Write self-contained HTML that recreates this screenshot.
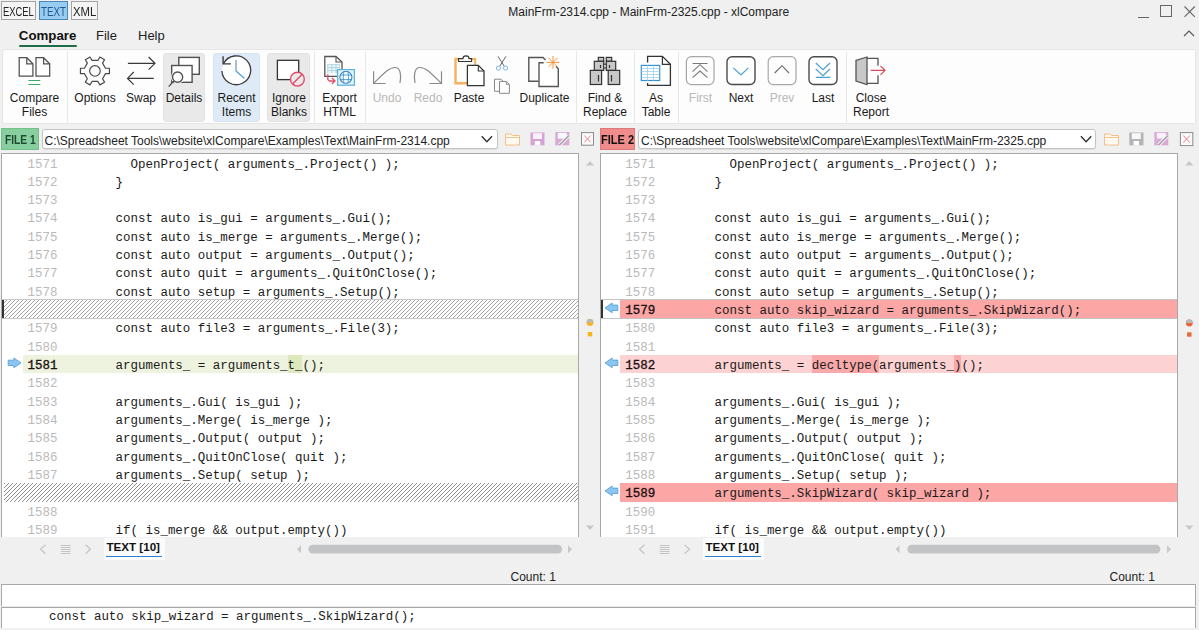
<!DOCTYPE html>
<html><head><meta charset="utf-8">
<style>
*{margin:0;padding:0;box-sizing:border-box}
html,body{width:1199px;height:630px;overflow:hidden;background:#f0f0f0;font-family:"Liberation Sans",sans-serif;color:#1a1a1a;position:relative}
.a{position:absolute}
.t{position:absolute;white-space:pre;line-height:1}
.mode{position:absolute;top:1.2px;height:18.4px;border:1px solid #a4a4a4;background:#f4f4f4;font-size:12px;line-height:16px;text-align:center;color:#333}
.ribbon{position:absolute;left:2.3px;top:49.3px;width:1193.5px;height:74.5px;background:#fdfdfd;border-radius:2px;border:1px solid #e6e6e6}
.sep{position:absolute;top:50.5px;width:1px;height:73px;background:#e8e8e8}
.btnbg{position:absolute;top:52.5px;height:69px;border-radius:3px}
.lbl{position:absolute;font-size:12px;line-height:14.2px;text-align:center;white-space:pre;color:#1a1a1a}
.dis{color:#b8b8b8}
svg{position:absolute;overflow:visible}
.pane{position:absolute;top:153px;height:384px;background:#fff;border:1px solid #a8a8a8;border-bottom:none;overflow:hidden}
.row{position:absolute;left:0;height:18.33px;width:100%}
.ln{position:absolute;top:2.0px;font-family:"Liberation Mono",monospace;font-size:12.47px;line-height:18.33px;color:#bababa;white-space:pre}
.code{position:absolute;top:2.0px;font-family:"Liberation Mono",monospace;font-size:12.47px;line-height:18.33px;color:#1a1a1a;white-space:pre}
.hatch{background:repeating-linear-gradient(135deg,#8e8e8e 0,#8e8e8e 0.95px,#fff 0.95px,#fff 2.83px)}
.hb{background:repeating-linear-gradient(135deg,#a4a4a4 0,#a4a4a4 0.9px,#fff 0.9px,#fff 2.83px);border-top:1px solid #c8c8c8;border-bottom:1px solid #c8c8c8}
</style></head><body>

<!-- mode buttons -->
<div class="mode" style="left:1.2px;width:34.5px"></div>
<div class="mode" style="left:39.2px;width:28.6px;background:#99ccf3;border-color:#4a88b8"></div>
<div class="mode" style="left:71.1px;width:26.6px"></div>
<div class="t" style="left:3.3px;top:5.5px;font-size:12.5px;color:#222;transform:scaleX(0.75);transform-origin:0 0">EXCEL</div>
<div class="t" style="left:41.1px;top:5.5px;font-size:12.5px;color:#1f5a8a;transform:scaleX(0.78);transform-origin:0 0">TEXT</div>
<div class="t" style="left:72.5px;top:5.5px;font-size:12.5px;color:#222;transform:scaleX(0.9);transform-origin:0 0">XML</div>

<!-- title -->
<div class="t" style="left:508.3px;top:6px;font-size:12px;color:#222">MainFrm-2314.cpp - MainFrm-2325.cpp - xlCompare</div>

<!-- window controls -->
<div class="a" style="left:1138px;top:16.5px;width:11px;height:1px;background:#666"></div>
<div class="a" style="left:1159.5px;top:4.8px;width:12.5px;height:12.5px;border:1px solid #666"></div>
<svg style="left:1183.5px;top:5.5px" width="12" height="12"><path d="M0.5 0.5L10.8 10.8M10.8 0.5L0.5 10.8" stroke="#666" stroke-width="1.1"/></svg>
<svg style="left:1183px;top:30px" width="12" height="7"><path d="M1 6L6 1L11 6" stroke="#555" stroke-width="1.1" fill="none"/></svg>

<!-- menu tabs -->
<div class="t" style="left:18.8px;top:29px;font-size:13.3px;font-weight:bold;color:#111">Compare</div>
<div class="a" style="left:18.5px;top:45.2px;width:58.5px;height:2.3px;background:#1f6e4a;border-radius:1px"></div>
<div class="t" style="left:96px;top:29px;font-size:13px;color:#222">File</div>
<div class="t" style="left:138px;top:29px;font-size:13px;color:#222">Help</div>

<!-- ribbon -->
<div class="ribbon"></div>
<!-- RIBBON_CONTENT -->
<!-- button backgrounds -->
<div class="btnbg" style="left:163.3px;width:42px;background:#e9e9e9;border:1px solid #e2e2e2"></div>
<div class="btnbg" style="left:212.8px;width:47.2px;background:#deeaf6;border:1px solid #d6e4f2"></div>
<div class="btnbg" style="left:267.4px;width:43px;background:#e9e9e9;border:1px solid #e2e2e2"></div>
<div class="sep" style="left:67px"></div>
<div class="sep" style="left:314px"></div>
<div class="sep" style="left:365px"></div>
<div class="sep" style="left:576px"></div>
<div class="sep" style="left:634px"></div>
<div class="sep" style="left:678px"></div>
<div class="sep" style="left:846px"></div>
<svg style="left:0;top:0" width="1199" height="130" fill="none" stroke-linejoin="miter">
 <!-- compare files -->
 <g stroke="#505050" stroke-width="1.25" fill="#fff">
  <path d="M19.2 57.7H26.8L32.9 63.8V76H19.2Z"/><path d="M26.8 57.7V63.8H32.9" fill="none"/>
  <path d="M36 57.7H43.6L49.7 63.8V76H36Z"/><path d="M43.6 57.7V63.8H49.7" fill="none"/>
 </g>
 <path d="M28.4 80.5H40.3M28.4 84.5H40.3" stroke="#3aaa6a" stroke-width="1.1"/>
 <!-- gear -->
 <path d="M105.49 68.25 L109.45 68.25 L109.45 73.65 L105.49 73.65 L102.56 78.73 L104.54 82.16 L99.86 84.86 L97.88 81.43 L92.02 81.43 L90.04 84.86 L85.36 82.16 L87.34 78.73 L84.41 73.65 L80.45 73.65 L80.45 68.25 L84.41 68.25 L87.34 63.17 L85.36 59.74 L90.04 57.04 L92.02 60.47 L97.88 60.47 L99.86 57.04 L104.54 59.74 L102.56 63.17Z" stroke="#4a4a4a" stroke-width="1.2" stroke-linejoin="round"/>
 <circle cx="94.95" cy="70.95" r="5.3" stroke="#4a4a4a" stroke-width="1.2"/>
 <!-- swap -->
 <path d="M127.9 63.3H155M148.6 57L155 63.3L148.6 69.7M127.5 78.4H153.8M133.8 72L127.5 78.4L133.8 84.7" stroke="#3a3a3a" stroke-width="1.2"/>
 <!-- details -->
 <mask id="mdet"><rect x="160" y="50" width="50" height="45" fill="#fff"/><circle cx="177.6" cy="77.1" r="6.7" fill="#000"/></mask>
 <g stroke="#505050" stroke-width="1.4">
  <rect x="178.8" y="57.4" width="20.5" height="16.9" fill="#fff"/>
  <rect x="171.7" y="65.5" width="20.4" height="16.8" fill="#fff" stroke="none"/>
  <rect x="171.7" y="65.5" width="20.4" height="16.8" fill="none" mask="url(#mdet)"/>
  <circle cx="177.6" cy="77.1" r="5.1" fill="#fff"/>
  <path d="M173.8 81L168.7 86.6"/>
 </g>
 <!-- recent -->
 <circle cx="236.3" cy="70.9" r="14.3" fill="#fff"/>
 <path d="M223.4 63.8A14.4 14.4 0 1 1 221.9 71" stroke="#3a3a3a" stroke-width="1.3"/>
 <path d="M223.1 56.2V63.9H230.9" stroke="#3a3a3a" stroke-width="1.4"/>
 <path d="M236 59.9V71" stroke="#6f9fbf" stroke-width="1.3"/>
 <path d="M236 71L244.3 78.3" stroke="#4aa0d8" stroke-width="1.3"/>
 <!-- ignore blanks -->
 <rect x="277.4" y="60.3" width="21.3" height="19.3" stroke="#333" stroke-width="1.3" fill="#fff"/>
 <circle cx="297.4" cy="79.2" r="6.9" stroke="#e04868" stroke-width="1.4" fill="#e9e9e9"/>
 <path d="M302.3 74.3L292.5 84.1" stroke="#e04868" stroke-width="1.4"/>
 <!-- export html -->
 <path d="M337 76.4H324.8V56.5H336L342 62V69" stroke="#555" stroke-width="1.3" fill="#fff"/>
 <path d="M336 56.5V62H342" stroke="#555" stroke-width="1.1"/>
 <rect x="327.2" y="64.1" width="12.7" height="9" fill="#b9d6de"/>
 <path d="M328.2 65.1h3v2h-3zM332.4 65.1h3v2h-3zM336.6 65.1h2.4v2h-2.4zM328.2 68.1h3v2h-3zM332.4 68.1h3v2h-3zM336.6 68.1h2.4v2h-2.4zM328.2 71.1h3v1.8h-3zM332.4 71.1h3v1.8h-3z" fill="#e6f8fb"/>
 <path d="M327.8 74.3V79.5L329.5 81H335M332 78L335 81L332 84" stroke="#e05068" stroke-width="1.3"/>
 <rect x="337.6" y="69.6" width="16.8" height="15.6" fill="#e4f4fb" stroke="#62b4d8" stroke-width="1.3"/>
 <circle cx="345.9" cy="77.3" r="6" stroke="#3a88c8" stroke-width="1.1" fill="#f4fbff"/>
 <path d="M340.2 75H351.6M340.2 79.6H351.6M344 71.6C343 74.5 343 80 344 83M347.8 71.6C348.8 74.5 348.8 80 347.8 83" stroke="#3a88c8" stroke-width="0.8"/>
 <!-- undo redo -->
 <path d="M373.6 71.3V83.5H385.6M374 83C384 73 389 67.5 395 67.5C400.5 67.5 401.5 75 400 83" stroke="#8a8a8a" stroke-width="1.2"/>
 <path d="M441.5 71.3V83.5H429.5M441 83C431 73 426 67.5 420 67.5C414.5 67.5 413.5 75 415 83" stroke="#8a8a8a" stroke-width="1.2"/>
 <!-- paste -->
 <path d="M459 59H455.5V83.2H467" stroke="#f6b260" stroke-width="2.4"/>
 <path d="M471 59H475.2V65.5" stroke="#f6b260" stroke-width="2"/>
 <path d="M458.6 61.5V58.6H463C463 55 469 55 469 58.6H471.6V61.5Z" stroke="#333" stroke-width="1.1" fill="#fff"/>
 <path d="M467.4 65.3H478.3L484 71V85.6H467.4Z" stroke="#333" stroke-width="1.25" fill="#fff"/>
 <path d="M478.3 65.3V71H484" stroke="#333" stroke-width="1.1"/>
 <!-- scissors -->
 <path d="M498 56.3L504.3 66.3M506 56.3L499.7 66.3" stroke="#666" stroke-width="1"/>
 <circle cx="498.4" cy="68.1" r="2.1" stroke="#7fb6e4" stroke-width="1" fill="#fff"/>
 <circle cx="505.6" cy="68.1" r="2.1" stroke="#7fb6e4" stroke-width="1" fill="#fff"/>
 <!-- copy -->
 <path d="M499.4 91.3H494.5V79.2H501L503 81.2" stroke="#888" stroke-width="1"/>
 <path d="M499.5 81.4H506.3L509.4 84.4V93.3H499.5Z" stroke="#888" stroke-width="1" fill="#fff"/>
 <path d="M506.3 81.4V84.4H509.4" stroke="#888" stroke-width="0.9"/>
 <!-- duplicate -->
 <path d="M538.5 81.3H528.8V57.5H543L545.5 60" stroke="#555" stroke-width="1.4"/>
 <path d="M543.7 62.7H539V86.5H558.3V68.8L556 66.5" stroke="#555" stroke-width="1.4" fill="#fff"/>
 <path d="M553 56V68.8M546.6 62.4H559.4M548.5 57.9L557.5 66.9M557.5 57.9L548.5 66.9" stroke="#f39440" stroke-width="1"/>
 <!-- binoculars -->
 <g stroke="#333" stroke-width="1.2" fill="#c8c8c8">
  <rect x="598.3" y="57.4" width="5.4" height="3.9"/><rect x="606.3" y="57.4" width="5.4" height="3.9"/>
  <rect x="594.3" y="61.3" width="9.4" height="9.1"/><rect x="606.3" y="61.3" width="9.4" height="9.1"/>
  <rect x="590.3" y="70.4" width="11.3" height="14.1"/><rect x="608.2" y="70.4" width="11.5" height="14.1"/>
  <path d="M603.7 64.2H606.3M603.7 68H606.3" fill="none"/>
  <path d="M600.5 65V68M609.5 65V68M598.5 75V81.5M611.5 75V81.5" fill="none"/>
 </g>
 <!-- as table -->
 <path d="M647.6 62.5V56.4H662.4L670.4 64.3V85.3H647.6V83" stroke="#333" stroke-width="1.3" fill="#fff"/>
 <path d="M662.4 56.4V64.3H670.4" stroke="#333" stroke-width="1.2"/>
 <rect x="641.3" y="65.4" width="18.4" height="15.1" fill="#fff" stroke="#3a8fd0" stroke-width="1.2"/>
 <path d="M647.5 65.5V80.5M653.5 65.5V80.5M641.5 68.5H659.5M641.5 71.5H659.5M641.5 74.5H659.5M641.5 77.5H659.5" stroke="#9fd0ee" stroke-width="0.8"/>
 <!-- first -->
 <rect x="686.4" y="56.6" width="27.6" height="28" rx="5" stroke="#a8a8a8" stroke-width="1.2" fill="#fdfdfd"/>
 <path d="M692.5 63.5H707.5M692.5 71.7L700 64.7L707.5 71.7M692.5 77.7L700 71L707.5 77.7" stroke="#7a7a7a" stroke-width="1.1"/>
 <!-- next -->
 <rect x="727" y="56.8" width="28" height="27.7" rx="5" stroke="#4a4a4a" stroke-width="1.4" fill="#fff"/>
 <path d="M733.3 67.9L741 75L748.3 67.9" stroke="#4a9fd5" stroke-width="1.2"/>
 <!-- prev -->
 <rect x="768.2" y="56.6" width="27.8" height="28" rx="5" stroke="#a8a8a8" stroke-width="1.2" fill="#fdfdfd"/>
 <path d="M774.7 73L782 65.7L789 73" stroke="#6a6a6a" stroke-width="1.1"/>
 <!-- last -->
 <rect x="809" y="56.8" width="28" height="27.7" rx="5" stroke="#4a4a4a" stroke-width="1.4" fill="#fff"/>
 <path d="M815.8 63L823 69.7L830 63M815.8 69L823 75.7L830 69M815.8 77.3H830.3" stroke="#4a9fd5" stroke-width="1.2"/>
 <!-- close report -->
 <path d="M856 60.3L867 57V84.7L856 81Z" fill="#c8c8c8" stroke="#555" stroke-width="1.3"/>
 <path d="M867 58.3H878V65.7M878 75.2V83.3H867" stroke="#555" stroke-width="1.3"/>
 <path d="M870.7 70.3H885M880.5 65.8L885 70.3L880.5 74.8" stroke="#d94a5a" stroke-width="1.2"/>
</svg>
<div class="lbl" style="left:4.5px;top:90.7px;width:60px">Compare
Files</div>
<div class="lbl" style="left:70px;top:90.7px;width:50px">Options</div>
<div class="lbl" style="left:121px;top:90.7px;width:40px">Swap</div>
<div class="lbl" style="left:164px;top:90.7px;width:40px">Details</div>
<div class="lbl" style="left:211.5px;top:90.7px;width:50px">Recent
Items</div>
<div class="lbl" style="left:264px;top:90.7px;width:50px">Ignore
Blanks</div>
<div class="lbl" style="left:314.5px;top:90.7px;width:50px">Export
HTML</div>
<div class="lbl dis" style="left:367px;top:90.7px;width:40px">Undo</div>
<div class="lbl dis" style="left:408px;top:90.7px;width:40px">Redo</div>
<div class="lbl" style="left:449px;top:90.7px;width:40px">Paste</div>
<div class="lbl" style="left:514.5px;top:90.7px;width:60px">Duplicate</div>
<div class="lbl" style="left:575px;top:90.7px;width:60px">Find &amp;
Replace</div>
<div class="lbl" style="left:631px;top:90.7px;width:50px">As
Table</div>
<div class="lbl dis" style="left:680.5px;top:90.7px;width:40px">First</div>
<div class="lbl" style="left:721px;top:90.7px;width:40px">Next</div>
<div class="lbl dis" style="left:762px;top:90.7px;width:40px">Prev</div>
<div class="lbl" style="left:803px;top:90.7px;width:40px">Last</div>
<div class="lbl" style="left:846px;top:90.7px;width:50px">Close
Report</div>


<!-- FILEBARS -->
<!-- file bar 1 -->
<div class="a" style="left:1.2px;top:128.1px;width:37.5px;height:21.6px;background:#88cfa0;border:1px solid #72c08c"></div>
<div class="t" style="left:4.8px;top:134.3px;font-size:12px;font-weight:bold;color:#1e4a30;transform:scaleX(0.85);transform-origin:0 0">FILE 1</div>
<div class="a" style="left:42px;top:128.5px;width:455.7px;height:20.8px;background:#fff;border:1px solid #c4c4c4;border-radius:3px;box-shadow:0 1px 1px rgba(0,0,0,0.08)"></div>
<div class="t" style="left:44.5px;top:134.6px;font-size:12px;color:#222">C:\Spreadsheet Tools\website\xlCompare\Examples\Text\MainFrm-2314.cpp</div>
<!-- file bar 2 -->
<div class="a" style="left:600.1px;top:128.3px;width:35px;height:21.3px;background:#f08c8c;border:1px solid #e07a7a"></div>
<div class="t" style="left:601.4px;top:134.3px;font-size:12px;font-weight:bold;color:#111;transform:scaleX(0.92);transform-origin:0 0">FILE 2</div>
<div class="a" style="left:638.4px;top:128.5px;width:458px;height:20.8px;background:#fff;border:1px solid #c4c4c4;border-radius:3px;box-shadow:0 1px 1px rgba(0,0,0,0.08)"></div>
<div class="t" style="left:641px;top:134.6px;font-size:12px;color:#222">C:\Spreadsheet Tools\website\xlCompare\Examples\Text\MainFrm-2325.cpp</div>
<svg style="left:0;top:0" width="1199" height="160" fill="none">
 <path d="M481.7 136.3L486.9 141.8L492 136.3" stroke="#333" stroke-width="1.4"/>
 <path d="M1080.9 136.3L1086.1 141.8L1091.2 136.3" stroke="#333" stroke-width="1.4"/>
 <!-- folder L -->
 <path d="M505.5 145V134H511L512.5 135.5H519.5V145Z" stroke="#f2c088" stroke-width="1" fill="#fff9ef"/>
 <path d="M505.5 137.5H519.5" stroke="#f2c088" stroke-width="1"/>
 <!-- save L purple -->
 <path d="M530.5 132.5H544.5V145.3H530.5Z" fill="#d7a3d6"/>
 <rect x="533" y="133.2" width="9" height="5.8" fill="#fbf0fb"/>
 <rect x="534.8" y="141" width="5.4" height="4.3" fill="#fff"/>
 <!-- save-as L -->
 <path d="M555.3 132H569.3V145.3H555.3Z" fill="#d9a9d8"/>
 <rect x="557.8" y="132.8" width="9" height="5.8" fill="#f4fbff"/>
 <path d="M559.5 145L568.5 136" stroke="#fff" stroke-width="3.2"/>
 <path d="M559.5 145L568.5 136" stroke="#777" stroke-width="1.6"/>
 <path d="M559.5 145L568.5 136" stroke="#fff" stroke-width="0.6"/>
 <!-- close L -->
 <rect x="581.5" y="132.6" width="12" height="12.6" stroke="#8a8a8a" stroke-width="1" fill="#fafafa"/>
 <path d="M584.3 135.5L590.7 142.3M590.7 135.5L584.3 142.3" stroke="#f0808f" stroke-width="1"/>
 <!-- folder R -->
 <path d="M1104.5 145V134H1110L1111.5 135.5H1118.5V145Z" stroke="#f2c088" stroke-width="1" fill="#fff9ef"/>
 <path d="M1104.5 137.5H1118.5" stroke="#f2c088" stroke-width="1"/>
 <!-- save R gray -->
 <path d="M1129.3 132.5H1143.5V145.3H1129.3Z" fill="#b4b4b4"/>
 <rect x="1131.8" y="133.2" width="9" height="5.8" fill="#f8f8f8"/>
 <rect x="1133.6" y="141" width="5.4" height="4.3" fill="#fff"/>
 <!-- save-as R -->
 <path d="M1154.3 132H1168.3V145.3H1154.3Z" fill="#d9a9d8"/>
 <rect x="1156.8" y="132.8" width="9" height="5.8" fill="#fbf0fb"/>
 <path d="M1158.5 145L1167.5 136" stroke="#fff" stroke-width="3.2"/>
 <path d="M1158.5 145L1167.5 136" stroke="#777" stroke-width="1.6"/>
 <path d="M1158.5 145L1167.5 136" stroke="#fff" stroke-width="0.6"/>
 <!-- close R -->
 <rect x="1180.4" y="132.6" width="12.4" height="13" stroke="#8a8a8a" stroke-width="1" fill="#fafafa"/>
 <path d="M1183.3 135.5L1189.9 142.7M1189.9 135.5L1183.3 142.7" stroke="#f0808f" stroke-width="1"/>
</svg>




<div class="pane" style="left:1px;width:578px">
<div class="row" style="top:-0.50px"><div class="ln" style="left:25.5px;">1571</div><div class="code" style="left:113.5px">  OpenProject( arguments_.Project() );</div></div>
<div class="row" style="top:17.83px"><div class="ln" style="left:25.5px;">1572</div><div class="code" style="left:113.5px">}</div></div>
<div class="row" style="top:36.16px"><div class="ln" style="left:25.5px;">1573</div></div>
<div class="row" style="top:54.49px"><div class="ln" style="left:25.5px;">1574</div><div class="code" style="left:113.5px">const auto is_gui = arguments_.Gui();</div></div>
<div class="row" style="top:72.82px"><div class="ln" style="left:25.5px;">1575</div><div class="code" style="left:113.5px">const auto is_merge = arguments_.Merge();</div></div>
<div class="row" style="top:91.15px"><div class="ln" style="left:25.5px;">1576</div><div class="code" style="left:113.5px">const auto output = arguments_.Output();</div></div>
<div class="row" style="top:109.48px"><div class="ln" style="left:25.5px;">1577</div><div class="code" style="left:113.5px">const auto quit = arguments_.QuitOnClose();</div></div>
<div class="row" style="top:127.81px"><div class="ln" style="left:25.5px;">1578</div><div class="code" style="left:113.5px">const auto setup = arguments_.Setup();</div></div>
<div class="row hatch hb" style="top:145.34px;height:19.83px"></div>
<div class="a" style="left:0;top:146.14px;width:2px;height:18.33px;background:#333"></div>
<div class="row" style="top:164.47px"><div class="ln" style="left:25.5px;">1579</div><div class="code" style="left:113.5px">const auto file3 = arguments_.File(3);</div></div>
<div class="row" style="top:182.80px"><div class="ln" style="left:25.5px;">1580</div></div>
<div class="row" style="top:201.13px"><div class="a" style="left:21px;top:0;right:0;bottom:0;background:#eef3df"></div><svg style="left:0;top:0" width="22" height="18"><path d="M19 7.9L11.9 3V5.2H6.2V10.6H11.9V12.7Z" fill="#8cc6ef" stroke="#5a9fd8" stroke-width="0.9" stroke-linejoin="round"/></svg><div class="a" style="left:285.54px;top:0;width:14.96px;height:100%;background:#dde8bd"></div><div class="ln" style="left:25.5px;color:#1e1212;-webkit-text-stroke:0.35px #1e1212;">1581</div><div class="code" style="left:113.5px">arguments_ = arguments_t_();</div></div>
<div class="row" style="top:219.46px"><div class="ln" style="left:25.5px;">1582</div></div>
<div class="row" style="top:237.79px"><div class="ln" style="left:25.5px;">1583</div><div class="code" style="left:113.5px">arguments_.Gui( is_gui );</div></div>
<div class="row" style="top:256.12px"><div class="ln" style="left:25.5px;">1584</div><div class="code" style="left:113.5px">arguments_.Merge( is_merge );</div></div>
<div class="row" style="top:274.45px"><div class="ln" style="left:25.5px;">1585</div><div class="code" style="left:113.5px">arguments_.Output( output );</div></div>
<div class="row" style="top:292.78px"><div class="ln" style="left:25.5px;">1586</div><div class="code" style="left:113.5px">arguments_.QuitOnClose( quit );</div></div>
<div class="row" style="top:311.11px"><div class="ln" style="left:25.5px;">1587</div><div class="code" style="left:113.5px">arguments_.Setup( setup );</div></div>
<div class="row hatch" style="top:329.14px;height:18.93px;left:1.5px"></div>
<div class="row" style="top:347.77px"><div class="ln" style="left:25.5px;">1588</div></div>
<div class="row" style="top:366.10px"><div class="ln" style="left:25.5px;">1589</div><div class="code" style="left:113.5px">if( is_merge &amp;&amp; output.empty())</div></div>
</div>
<div class="pane" style="left:600px;width:577.8px">
<div class="row" style="top:-0.50px"><div class="ln" style="left:24.2px;">1571</div><div class="code" style="left:113.5px">  OpenProject( arguments_.Project() );</div></div>
<div class="row" style="top:17.83px"><div class="ln" style="left:24.2px;">1572</div><div class="code" style="left:113.5px">}</div></div>
<div class="row" style="top:36.16px"><div class="ln" style="left:24.2px;">1573</div></div>
<div class="row" style="top:54.49px"><div class="ln" style="left:24.2px;">1574</div><div class="code" style="left:113.5px">const auto is_gui = arguments_.Gui();</div></div>
<div class="row" style="top:72.82px"><div class="ln" style="left:24.2px;">1575</div><div class="code" style="left:113.5px">const auto is_merge = arguments_.Merge();</div></div>
<div class="row" style="top:91.15px"><div class="ln" style="left:24.2px;">1576</div><div class="code" style="left:113.5px">const auto output = arguments_.Output();</div></div>
<div class="row" style="top:109.48px"><div class="ln" style="left:24.2px;">1577</div><div class="code" style="left:113.5px">const auto quit = arguments_.QuitOnClose();</div></div>
<div class="row" style="top:127.81px"><div class="ln" style="left:24.2px;">1578</div><div class="code" style="left:113.5px">const auto setup = arguments_.Setup();</div></div>
<div class="row" style="top:146.14px"><div class="a" style="left:19px;top:0;right:0;bottom:0;background:#fca6a6"></div><svg style="left:0;top:0" width="22" height="18"><path d="M4 7.9L11.1 3V5.1H16.8V10.5H11.1V12.7Z" fill="#8cc6ef" stroke="#5a9fd8" stroke-width="0.9" stroke-linejoin="round"/></svg><div class="a" style="left:0;top:-0.8px;right:0;height:1px;background:#c4c4c4"></div><div class="a" style="left:0;bottom:-0.7px;right:0;height:1px;background:#c4c4c4"></div><div class="a" style="left:0;top:0;width:1.8px;height:100%;background:#333"></div><div class="ln" style="left:24.2px;color:#1e1212;-webkit-text-stroke:0.35px #1e1212;">1579</div><div class="code" style="left:113.5px">const auto skip_wizard = arguments_.SkipWizard();</div></div>
<div class="row" style="top:164.47px"><div class="ln" style="left:24.2px;">1580</div><div class="code" style="left:113.5px">const auto file3 = arguments_.File(3);</div></div>
<div class="row" style="top:182.80px"><div class="ln" style="left:24.2px;">1581</div></div>
<div class="row" style="top:201.13px"><div class="a" style="left:19px;top:0;right:0;bottom:0;background:#fdd2d2"></div><svg style="left:0;top:0" width="22" height="18"><path d="M4 7.9L11.1 3V5.1H16.8V10.5H11.1V12.7Z" fill="#8cc6ef" stroke="#5a9fd8" stroke-width="0.9" stroke-linejoin="round"/></svg><div class="a" style="left:210.74px;top:0;width:67.32px;height:100%;background:#f9a9a9"></div><div class="a" style="left:352.86px;top:0;width:7.48px;height:100%;background:#f9a9a9"></div><div class="ln" style="left:24.2px;color:#1e1212;-webkit-text-stroke:0.35px #1e1212;">1582</div><div class="code" style="left:113.5px">arguments_ = decltype(arguments_)();</div></div>
<div class="row" style="top:219.46px"><div class="ln" style="left:24.2px;">1583</div></div>
<div class="row" style="top:237.79px"><div class="ln" style="left:24.2px;">1584</div><div class="code" style="left:113.5px">arguments_.Gui( is_gui );</div></div>
<div class="row" style="top:256.12px"><div class="ln" style="left:24.2px;">1585</div><div class="code" style="left:113.5px">arguments_.Merge( is_merge );</div></div>
<div class="row" style="top:274.45px"><div class="ln" style="left:24.2px;">1586</div><div class="code" style="left:113.5px">arguments_.Output( output );</div></div>
<div class="row" style="top:292.78px"><div class="ln" style="left:24.2px;">1587</div><div class="code" style="left:113.5px">arguments_.QuitOnClose( quit );</div></div>
<div class="row" style="top:311.11px"><div class="ln" style="left:24.2px;">1588</div><div class="code" style="left:113.5px">arguments_.Setup( setup );</div></div>
<div class="row" style="top:329.44px"><div class="a" style="left:19px;top:0;right:0;bottom:0;background:#fca6a6"></div><svg style="left:0;top:0" width="22" height="18"><path d="M4 7.9L11.1 3V5.1H16.8V10.5H11.1V12.7Z" fill="#8cc6ef" stroke="#5a9fd8" stroke-width="0.9" stroke-linejoin="round"/></svg><div class="ln" style="left:24.2px;color:#1e1212;-webkit-text-stroke:0.35px #1e1212;">1589</div><div class="code" style="left:113.5px">arguments_.SkipWizard( skip_wizard );</div></div>
<div class="row" style="top:347.77px"><div class="ln" style="left:24.2px;">1590</div></div>
<div class="row" style="top:366.10px"><div class="ln" style="left:24.2px;">1591</div><div class="code" style="left:113.5px">if( is_merge &amp;&amp; output.empty())</div></div>
</div>


<!-- BOTTOM -->
<!-- gutter markers -->
<svg style="left:0;top:150px" width="1199" height="420" fill="none">
 <path d="M586 15.5L590 11L594 15.5Z" fill="#c8c8c8"/>
 <path d="M586 375.5L590 380L594 375.5Z" fill="#c8c8c8"/>
 <path d="M1185.3 15.5L1189.3 11L1193.3 15.5Z" fill="#c8c8c8"/>
 <path d="M1185.3 375.5L1189.3 380L1193.3 375.5Z" fill="#c8c8c8"/>
 <circle cx="590" cy="172.5" r="3.4" fill="#f4b41a"/>
 <path d="M586.6 172.5A3.4 3.4 0 0 1 593.4 172.5Z" fill="#b9b9b9"/>
 <rect x="587.8" y="182" width="4.4" height="4.4" fill="#f4b41a"/>
 <circle cx="1189.3" cy="173" r="3.4" fill="#e8643a"/>
 <path d="M1185.9 173A3.4 3.4 0 0 1 1192.7 173Z" fill="#b9b9b9"/>
 <rect x="1187.1" y="182.3" width="4.4" height="4.4" fill="#e26d33"/>
</svg>
<!-- tab bars -->
<div class="a" style="left:104px;top:537.5px;width:60.7px;height:22px;background:#fbfbfb"></div>
<div class="a" style="left:702.5px;top:537.5px;width:61px;height:22px;background:#fbfbfb"></div>
<svg style="left:0;top:530px" width="1199" height="40" fill="none">
 <path d="M45.5 14.8L40.5 19.3L45.5 23.8" stroke="#c4c4c4" stroke-width="1.2"/>
 <path d="M60.8 15.5H70.6M60.8 17.5H70.6M60.8 19.5H70.6M60.8 21.5H70.6M60.8 23.5H70.6" stroke="#c4c4c4" stroke-width="1"/>
 <path d="M85.5 14.8L90.5 19.3L85.5 23.8" stroke="#c4c4c4" stroke-width="1.2"/>
 <path d="M644.5 14.8L639.5 19.3L644.5 23.8" stroke="#c4c4c4" stroke-width="1.2"/>
 <path d="M659.8 15.5H669.6M659.8 17.5H669.6M659.8 19.5H669.6M659.8 21.5H669.6M659.8 23.5H669.6" stroke="#c4c4c4" stroke-width="1"/>
 <path d="M684.5 14.8L689.5 19.3L684.5 23.8" stroke="#c4c4c4" stroke-width="1.2"/>
 <!-- scrollbars -->
 <path d="M301 15.2L297 19.2L301 23.2Z" fill="#c8c8c8"/>
 <rect x="308.4" y="14.8" width="253.7" height="8.6" rx="4.3" fill="#c2c4c6"/>
 <path d="M568 15.2L572 19.2L568 23.2Z" fill="#c8c8c8"/>
 <path d="M899.5 15.2L895.5 19.2L899.5 23.2Z" fill="#c8c8c8"/>
 <rect x="907.4" y="14.8" width="253" height="8.6" rx="4.3" fill="#c2c4c6"/>
 <path d="M1167 15.2L1171 19.2L1167 23.2Z" fill="#c8c8c8"/>
</svg>
<div class="t" style="left:106.5px;top:541.4px;font-size:11.6px;font-weight:bold;color:#111">TEXT [10]</div>
<div class="a" style="left:106px;top:555.7px;width:56.3px;height:1.8px;background:#2a7fd0"></div>
<div class="t" style="left:705.5px;top:541.4px;font-size:11.6px;font-weight:bold;color:#111">TEXT [10]</div>
<div class="a" style="left:705.1px;top:555.7px;width:56.3px;height:1.8px;background:#2a7fd0"></div>
<div class="t" style="left:510.5px;top:571px;font-size:12px;color:#222">Count: 1</div>
<div class="t" style="left:1109.5px;top:571px;font-size:12px;color:#222">Count: 1</div>
<!-- bottom boxes -->
<div class="a" style="left:1px;top:584px;width:1195px;height:21.5px;background:#fff;border:1px solid #a8a8a8;border-bottom:none"></div>
<div class="a" style="left:1px;top:605.5px;width:1195px;height:2px;background:#e8e8e8"></div>
<div class="a" style="left:1px;top:607px;width:1195px;height:21px;background:#fff;border:1px solid #a8a8a8;border-bottom:none"></div>
<div class="code" style="left:49px;top:609.8px;line-height:14px">const auto skip_wizard = arguments_.SkipWizard();</div>


</body></html>
